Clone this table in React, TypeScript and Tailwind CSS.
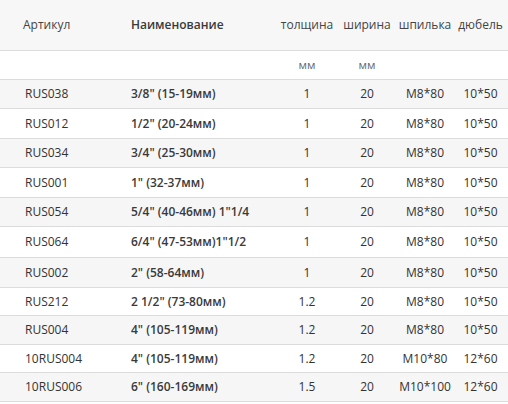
const rows = [
  { art: "RUS038", name: "3/8\" (15-19мм)", t: "1", w: "20", s: "M8*80", d: "10*50", h: "h-[29px]" },
  { art: "RUS012", name: "1/2\" (20-24мм)", t: "1", w: "20", s: "M8*80", d: "10*50", h: "h-[30px]" },
  { art: "RUS034", name: "3/4\" (25-30мм)", t: "1", w: "20", s: "M8*80", d: "10*50", h: "h-[29px]" },
  { art: "RUS001", name: "1\" (32-37мм)", t: "1", w: "20", s: "M8*80", d: "10*50", h: "h-[30px]" },
  { art: "RUS054", name: "5/4\" (40-46мм) 1\"1/4", t: "1", w: "20", s: "M8*80", d: "10*50", h: "h-[29px]" },
  { art: "RUS064", name: "6/4\" (47-53мм)1\"1/2", t: "1", w: "20", s: "M8*80", d: "10*50", h: "h-[31px]" },
  { art: "RUS002", name: "2\" (58-64мм)", t: "1", w: "20", s: "M8*80", d: "10*50", h: "h-[30px]" },
  { art: "RUS212", name: "2 1/2\" (73-80мм)", t: "1.2", w: "20", s: "M8*80", d: "10*50", h: "h-[28px]" },
  { art: "RUS004", name: "4\" (105-119мм)", t: "1.2", w: "20", s: "M8*80", d: "10*50", h: "h-[29px]" },
  { art: "10RUS004", name: "4\" (105-119мм)", t: "1.2", w: "20", s: "M10*80", d: "12*60", h: "h-[28px]" },
  { art: "10RUS006", name: "6\" (160-169мм)", t: "1.5", w: "20", s: "M10*100", d: "12*60", h: "h-[29px]" },
];

const cols = "grid grid-cols-[131px_146px_60px_60px_56px_55px] items-center";

export default function App() {
  return (
    <div className="w-[508px] h-[404px] overflow-hidden bg-white text-[12px] text-[#333] font-['Open_Sans',sans-serif]">
      <div className={`${cols} h-[51px] border-b border-[#dcdcdc] bg-[#f7f7f7] text-[#444]`}>
        <div className="pl-[23px]">Артикул</div>
        <div className="font-semibold text-[#3a3a3a]">Наименование</div>
        <div className="text-center">толщина</div>
        <div className="text-center">ширина</div>
        <div className="text-center">шпилька</div>
        <div className="text-center">дюбель</div>
      </div>
      <div className={`${cols} h-[29px] border-b border-[#dcdcdc] text-[11.5px] text-[#666]`}>
        <div />
        <div />
        <div className="text-center">мм</div>
        <div className="text-center">мм</div>
        <div />
        <div />
      </div>
      {rows.map((r, i) => (
        <div
          key={r.art + i}
          className={`${cols} ${r.h} border-b border-[#dcdcdc] ${i % 2 === 0 ? "bg-[#f6f6f6]" : "bg-white"}`}
        >
          <div className="pl-[25px]">{r.art}</div>
          <div className="font-semibold text-[#3a3a3a]">{r.name}</div>
          <div className="text-center">{r.t}</div>
          <div className="text-center">{r.w}</div>
          <div className="text-center">{r.s}</div>
          <div className="text-center">{r.d}</div>
        </div>
      ))}
    </div>
  );
}
